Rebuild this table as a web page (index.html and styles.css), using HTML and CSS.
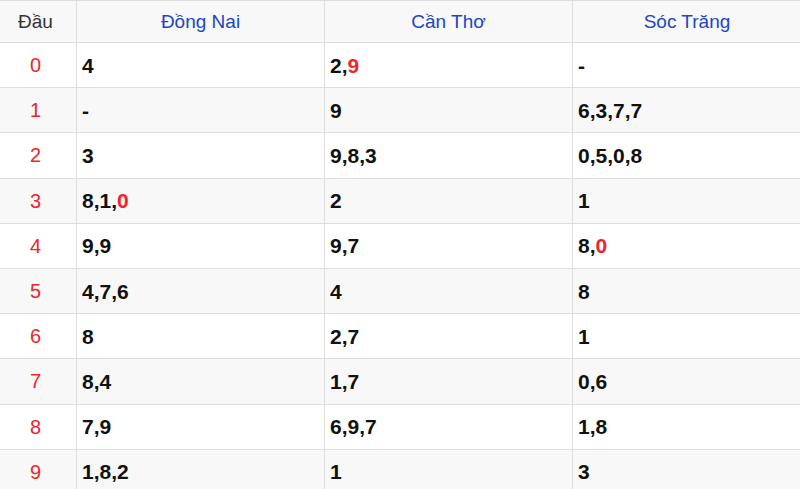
FILE: index.html
```html
<!DOCTYPE html>
<html lang="vi">
<head>
<meta charset="utf-8">
<link rel="stylesheet" href="styles.css">
</head>
<body>
<table class="loto">
  <colgroup>
    <col class="c-dau"><col class="c-prov"><col class="c-prov"><col class="c-last">
  </colgroup>
  <thead>
    <tr><th class="h-dau">Đầu</th><th>Đồng Nai</th><th>Cần Thơ</th><th>Sóc Trăng</th></tr>
  </thead>
  <tbody>
    <tr><td class="dau">0</td><td>4</td><td>2,<span class="hl">9</span></td><td>-</td></tr>
    <tr><td class="dau">1</td><td>-</td><td>9</td><td>6,3,7,7</td></tr>
    <tr><td class="dau">2</td><td>3</td><td>9,8,3</td><td>0,5,0,8</td></tr>
    <tr><td class="dau">3</td><td>8,1,<span class="hl">0</span></td><td>2</td><td>1</td></tr>
    <tr><td class="dau">4</td><td>9,9</td><td>9,7</td><td>8,<span class="hl">0</span></td></tr>
    <tr><td class="dau">5</td><td>4,7,6</td><td>4</td><td>8</td></tr>
    <tr><td class="dau">6</td><td>8</td><td>2,7</td><td>1</td></tr>
    <tr><td class="dau">7</td><td>8,4</td><td>1,7</td><td>0,6</td></tr>
    <tr><td class="dau">8</td><td>7,9</td><td>6,9,7</td><td>1,8</td></tr>
    <tr><td class="dau">9</td><td>1,8,2</td><td>1</td><td>3</td></tr>
  </tbody>
</table>
</body>
</html>
```
FILE: styles.css
```css
html, body {
  margin: 0;
  padding: 0;
  background: #ffffff;
}
body {
  font-family: "Liberation Sans", Arial, sans-serif;
  overflow: hidden;
}
.loto {
  width: 802px;
  margin-left: -1px;
  border-collapse: collapse;
  table-layout: fixed;
}
.c-dau { width: 77px; }
.c-prov { width: 248px; }
.c-last { width: 229px; }
.loto th, .loto td {
  border: 1px solid #dedede;
  padding: 0 5px;
  line-height: 1;
}
.loto thead th {
  height: 41px;
  background: #f8f8f8;
  color: #2045c3;
  font-weight: normal;
  font-size: 19px;
  text-align: center;
}
.loto thead .h-dau {
  color: #333333;
  padding: 0 7px 0 2px;
}
.loto tbody td {
  height: 44.2px;
  font-size: 21px;
  font-weight: bold;
  color: #111111;
}
.loto tbody tr:nth-child(even) td {
  background: #f8f8f8;
}
.loto tbody td.dau {
  text-align: center;
  font-weight: normal;
  font-size: 20px;
  color: #f0242a;
  padding: 0 7px 0 2px;
}
.hl {
  color: #f0242a;
}
```
